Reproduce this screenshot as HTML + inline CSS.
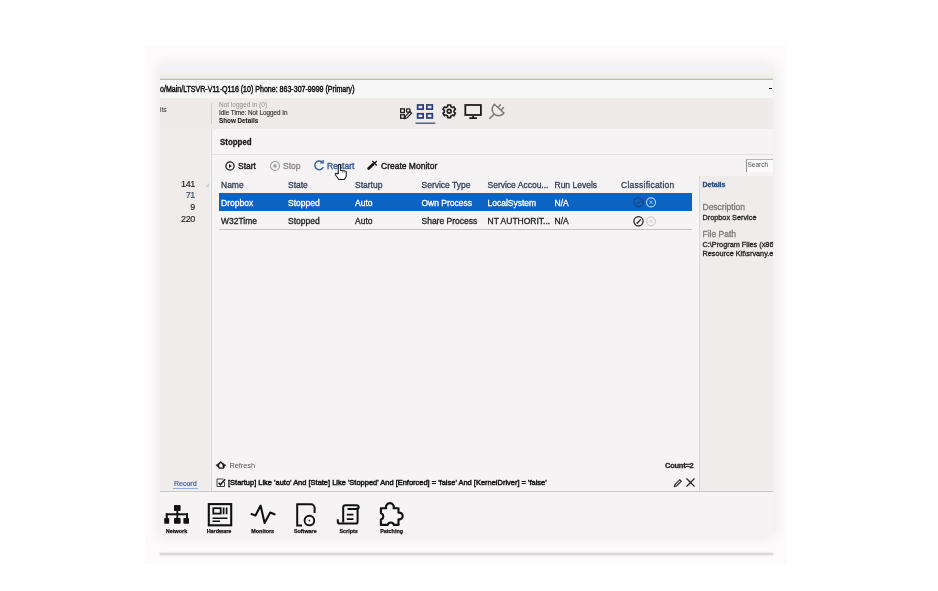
<!DOCTYPE html>
<html><head><meta charset="utf-8">
<style>
html,body{margin:0;padding:0;}
body{width:938px;height:591px;background:#fff;position:relative;overflow:hidden;font-family:"Liberation Sans",sans-serif;color:#222;}
.a{position:absolute;}
.t{position:absolute;white-space:nowrap;line-height:1;-webkit-text-stroke:0.3px currentColor;}
#frame{left:145px;top:45px;width:641px;height:519px;background:#fcfafa;box-shadow:0 0 2px #fdfcfc;}
#win{left:160px;top:65px;width:613px;height:471px;background:#f5f3f3;box-shadow:0 0 14px rgba(0,0,0,0.09);overflow:hidden;}
#bline{left:160px;top:553px;width:613px;height:2px;background:#d9d9d9;box-shadow:0 0 1.5px 0.5px #e2e2e2;}
</style></head><body>
<div id="all" style="position:absolute;left:0;top:0;width:938px;height:591px;will-change:transform">
<div class="a" id="frame"></div>
<div class="a" id="bline"></div>
<div class="a" id="win">
  <!-- header stripes -->
  <div class="a" style="left:0;top:0;width:613px;height:2px;background:#f3f3f3"></div>
  <div class="a" style="left:0;top:2px;width:613px;height:4px;background:#f2f2f7"></div>
  <div class="a" style="left:0;top:6px;width:613px;height:3px;background:#f5f2ee"></div>
  <div class="a" style="left:0;top:9px;width:613px;height:5px;background:#efeeee"></div>
  <div class="a" style="left:0;top:13px;width:613px;height:1px;background:#dde1d3"></div>
  <div class="a" style="left:0;top:14px;width:613px;height:1px;background:#b7c2a0"></div>
  <div class="a" style="left:0;top:15px;width:613px;height:18px;background:#f8f7f7"></div>
  <div class="t" style="left:0;top:19.6px;font-size:8.5px;color:#111;transform:scaleX(0.83);transform-origin:0 0;-webkit-text-stroke:0.45px #111">o/Main/LTSVR-V11-Q116 (10) Phone: 863-307-9999 (Primary)</div>
  <div class="a" style="left:609px;top:23px;width:3px;height:1px;background:#000"></div>
  <!-- gray band -->
  <div class="a" style="left:0;top:33px;width:613px;height:31px;background:#efebea"></div>
  <div class="t" style="left:0px;top:41.6px;font-size:6.5px;color:#444;-webkit-text-stroke:0.1px #444">its</div>
  <div class="a" style="left:51px;top:38px;width:1px;height:21px;background:#cfcfcf"></div>
  <div class="t" style="left:59px;top:36.5px;font-size:6.5px;color:#8a8a8a;-webkit-text-stroke:0">Not logged in (0)</div>
  <div class="t" style="left:59px;top:44.8px;font-size:6.3px;color:#333;-webkit-text-stroke:0.15px #333">Idle Time: Not Logged In</div>
  <div class="t" style="left:59px;top:53px;font-size:6.3px;color:#222;font-weight:bold;-webkit-text-stroke:0.1px #222">Show Details</div>
  <!-- sidebar -->
  <div class="a" style="left:0;top:64px;width:51px;height:362px;background:#f0ecec"></div>
  <div class="a" style="left:50px;top:64px;width:1px;height:362px;background:#f7f5f5"></div>
  <div class="a" style="left:51px;top:64px;width:1px;height:362px;background:#d4d1d1"></div>
  <div class="a" style="left:52px;top:64px;width:1px;height:362px;background:#f9f8f8"></div>
  <div class="t" style="left:5px;top:114.6px;width:30px;text-align:right;font-size:9px;letter-spacing:-0.35px;color:#222;-webkit-text-stroke:0.15px #222">141</div>
  <div class="t" style="left:5px;top:126.4px;width:30px;text-align:right;font-size:9px;letter-spacing:-0.35px;color:#3c4a64;-webkit-text-stroke:0.15px #3c4a64">71</div>
  <div class="t" style="left:5px;top:138.4px;width:30px;text-align:right;font-size:9px;letter-spacing:-0.35px;color:#222;-webkit-text-stroke:0.15px #222">9</div>
  <div class="t" style="left:5px;top:150.4px;width:30px;text-align:right;font-size:9px;letter-spacing:-0.35px;color:#222;-webkit-text-stroke:0.15px #222">220</div>
  <svg class="a" style="left:45px;top:118px" width="4" height="4" viewBox="0 0 4 4"><path d="M0 4 L4 0 V4 Z" fill="#cfcfcf"/></svg>
  <!-- content -->
  <div class="a" style="left:52px;top:89px;width:561px;height:1px;background:#e2e1e1"></div>
  <div class="t" style="left:59.5px;top:73px;font-size:9px;font-weight:bold;color:#1a1a1a;transform:scaleX(0.88);transform-origin:0 0">Stopped</div>
  <!-- details panel -->
  <div class="a" style="left:538px;top:111px;width:1px;height:315px;background:#faf9f7"></div><div class="a" style="left:539px;top:111px;width:74px;height:315px;background:#efeceb"></div>
  <div class="a" style="left:539px;top:111px;width:1px;height:315px;background:#d6d6d6"></div>

  <!-- top icons -->
  <!-- toolbar -->
  <svg class="a" style="left:64px;top:94.5px" width="12" height="12" viewBox="0 0 12 12"><circle cx="6" cy="6" r="4.1" fill="none" stroke="#222" stroke-width="1.3"/><path d="M5 4.1 L7.8 6 L5 7.9 Z" fill="#222"/></svg>
  <div class="t" style="left:78px;top:96.5px;font-size:8.5px;color:#1a1a1a;-webkit-text-stroke:0.4px #1a1a1a">Start</div>
  <svg class="a" style="left:108.5px;top:94.5px" width="12" height="12" viewBox="0 0 12 12"><circle cx="6" cy="6" r="4.5" fill="none" stroke="#9c9c9c" stroke-width="1.1"/><rect x="4.5" y="4.5" width="3" height="3" fill="#9c9c9c"/></svg>
  <div class="t" style="left:123px;top:96.5px;font-size:8.5px;color:#8a8a8a">Stop</div>
  <svg class="a" style="left:153px;top:94px" width="12" height="12" viewBox="0 0 12 12" fill="none" stroke="#3a5f9a" stroke-width="1.4"><path d="M9.3 3.2 A4.4 4.4 0 1 0 10.3 8"/><path d="M10.2 0.9 V3.9 H7.2"/></svg>
  <div class="t" style="left:167px;top:96.5px;font-size:8.5px;color:#2a5596;-webkit-text-stroke:0.35px #2a5596">Restart</div>
  <svg class="a" style="left:206px;top:94px" width="12" height="12" viewBox="0 0 12 12" fill="none" stroke="#1a1a1a"><path d="M2.6 9.6 L6.8 5.4" stroke-width="2.8" stroke-linecap="round"/><path d="M6.3 2 L10.8 6.5 M10.8 2 L6.3 6.5" stroke-width="1.3"/></svg>
  <div class="t" style="left:221px;top:96.5px;font-size:8.5px;color:#1a1a1a;-webkit-text-stroke:0.4px #1a1a1a">Create Monitor</div>
  <!-- cursor -->
  <!-- search -->
  <div class="a" style="left:586px;top:94px;width:27px;height:11.5px;background:#fbfafa;border-left:1px solid #8f8f8f;border-top:1px solid #b5b5b5"></div>
  <div class="t" style="left:587.5px;top:97.3px;font-size:6.5px;color:#6a6a6a;-webkit-text-stroke:0.1px #6a6a6a">Search</div>
  <!-- table -->
  <div class="a" style="left:59px;top:128px;width:473px;height:18px;background:#0d63c2"></div>
  <div class="a" style="left:59px;top:164px;width:473px;height:1px;background:#c4c4c4"></div>
  <div class="t" style="left:61px;top:116px;font-size:8.5px;color:#35415c">Name</div>
  <div class="t" style="left:128px;top:116px;font-size:8.5px;color:#35415c">State</div>
  <div class="t" style="left:195px;top:116px;font-size:8.5px;color:#35415c">Startup</div>
  <div class="t" style="left:261.5px;top:116px;font-size:8.5px;color:#35415c">Service Type</div>
  <div class="t" style="left:327.5px;top:116px;font-size:8.5px;color:#35415c">Service Accou...</div>
  <div class="t" style="left:394.5px;top:116px;font-size:8.5px;color:#35415c">Run Levels</div>
  <div class="t" style="left:461px;top:116px;font-size:8.5px;color:#35415c;letter-spacing:0.25px">Classification</div>

  <div class="t" style="left:61px;top:134.3px;font-size:8.5px;color:#fff">Dropbox</div>
  <div class="t" style="left:128px;top:134.3px;font-size:8.5px;color:#fff">Stopped</div>
  <div class="t" style="left:195px;top:134.3px;font-size:8.5px;color:#fff">Auto</div>
  <div class="t" style="left:261.5px;top:134.3px;font-size:8.5px;color:#fff">Own Process</div>
  <div class="t" style="left:327.5px;top:134.3px;font-size:8.5px;color:#fff">LocalSystem</div>
  <div class="t" style="left:394.5px;top:134.3px;font-size:8.5px;color:#fff">N/A</div>
  <svg class="a" style="left:472px;top:131px" width="24" height="12" viewBox="0 0 24 12" fill="none">
    <circle cx="6.5" cy="6.3" r="4.5" stroke="#1a4680" stroke-width="1.4"/><path d="M4.6 6.8 L5.9 8 L8.8 4.6" stroke="#1a4680" stroke-width="1.2"/>
    <circle cx="19" cy="6.3" r="4.5" stroke="#a9d0f7" stroke-width="1.2"/><path d="M17.5 4.8 L20.5 7.8 M20.5 4.8 L17.5 7.8" stroke="#a9d0f7" stroke-width="1"/>
  </svg>

  <div class="t" style="left:61px;top:152.3px;font-size:8.5px;color:#222">W32Time</div>
  <div class="t" style="left:128px;top:152.3px;font-size:8.5px;color:#222">Stopped</div>
  <div class="t" style="left:195px;top:152.3px;font-size:8.5px;color:#222">Auto</div>
  <div class="t" style="left:261.5px;top:152.3px;font-size:8.5px;color:#222">Share Process</div>
  <div class="t" style="left:327.5px;top:152.3px;font-size:8.5px;color:#222">NT AUTHORIT...</div>
  <div class="t" style="left:394.5px;top:152.3px;font-size:8.5px;color:#222">N/A</div>
  <svg class="a" style="left:472px;top:149.5px" width="24" height="12" viewBox="0 0 24 12" fill="none">
    <circle cx="6.5" cy="6.3" r="4.6" stroke="#1e1e1e" stroke-width="1.2"/><path d="M4.5 7.4 L5.4 8.2 L8.8 4.4" stroke="#1e1e1e" stroke-width="1.3"/>
    <circle cx="19" cy="6.3" r="4.5" stroke="#c4c4c4" stroke-width="1"/><path d="M17.6 4.9 L20.4 7.7 M20.4 4.9 L17.6 7.7" stroke="#c4c4c4" stroke-width="0.9"/>
  </svg>
  <!-- details -->
  <div class="t" style="left:542.5px;top:116px;font-size:7px;font-weight:bold;color:#1f4f8f">Details</div>
  <div class="t" style="left:542.5px;top:138px;font-size:8.5px;color:#7a7a7a">Description</div>
  <div class="t" style="left:542.5px;top:148.5px;font-size:7.3px;color:#222">Dropbox Service</div>
  <div class="t" style="left:542.5px;top:165px;font-size:8.5px;color:#7a7a7a">File Path</div>
  <div class="t" style="left:542.5px;top:175.5px;font-size:7.3px;color:#222">C:\Program Files (x86)\Windows</div>
  <div class="t" style="left:542.5px;top:185px;font-size:7.3px;color:#222">Resource Kit\srvany.exe</div>
  <!-- refresh / count -->
  
  <div class="t" style="left:69.5px;top:396.5px;font-size:7.3px;color:#555;-webkit-text-stroke:0">Refresh</div>
  <div class="t" style="left:505px;top:396.5px;font-size:7.5px;font-weight:bold;color:#222;letter-spacing:-0.25px">Count=2</div>
  <!-- filter -->
  <svg class="a" style="left:56px;top:413px" width="10" height="10" viewBox="0 0 10 10" fill="none" stroke="#444" stroke-width="1"><path d="M7.5 1 H1 V8.5 H8.5 V4"/><path d="M2.6 4.6 L4.3 6.8 L9.2 1.2" stroke="#1a1a1a" stroke-width="1.5"/></svg>
  <div class="t" style="left:68px;top:414.4px;font-size:7.47px;color:#111;-webkit-text-stroke:0.45px #111">[Startup] Like 'auto' And [State] Like 'Stopped' And [Enforced] = 'false' And [KernelDriver] = 'false'</div>
  <svg class="a" style="left:513px;top:413px" width="10" height="10" viewBox="0 0 10 10" fill="none" stroke="#222" stroke-width="1.1"><path d="M1.5 8.5 L2 6.5 L6.8 1.7 L8.3 3.2 L3.5 8 Z"/></svg>
  <svg class="a" style="left:525px;top:412px" width="11" height="11" viewBox="0 0 11 11" fill="none" stroke="#222" stroke-width="1.2"><path d="M1.5 1.5 L9.5 9.5 M9.5 1.5 L1.5 9.5"/></svg>
  <div class="t" style="left:14px;top:414.5px;font-size:7px;color:#3a5d9c;-webkit-text-stroke:0.2px #3a5d9c">Record</div>
  <div class="a" style="left:13px;top:422.5px;width:25px;height:1.6px;background:#8fb0dc"></div>
  <!-- bottom -->
  <div class="a" style="left:0;top:426px;width:613px;height:1px;background:#c9c9c9"></div>
</div>

<svg class="a" style="left:0;top:0" width="938" height="591" viewBox="0 0 938 591">
  <g fill="none" stroke="#1e1e1e" stroke-width="1.3">
    <rect x="400.65" y="108.85" width="3.7" height="3.7"/><rect x="400.65" y="114.75" width="3.7" height="3.5"/><rect x="406.5" y="108.85" width="3.4" height="3.2" rx="0.6"/>
    <path d="M404.9 118.5 L405.4 116.2 L410 111.6 L411.6 113.2 L407 117.8 Z" stroke-width="1.2"/>
  </g>
  <g fill="#e2e7f3" stroke="#273e7a" stroke-width="1.7">
    <rect x="417.65" y="104.95" width="5.5" height="4.2"/><rect x="426.85" y="104.95" width="5.5" height="4.2"/>
    <rect x="417.65" y="113.75" width="5.5" height="4.2"/><rect x="426.85" y="113.75" width="5.5" height="4.2"/>
  </g>
  <rect x="415.5" y="122.5" width="19.7" height="1.4" fill="#4a5a7a"/>
  <g fill="#1a1a1a" stroke="#1a1a1a" stroke-width="1.4" stroke-linejoin="round">
    <path d="M218.3 464.4 L220.7 462 L223.4 464.4 M218.1 466.3 L219.5 468.1 H223.2 L224.3 466.5" fill="none"/>
    <path d="M215.9 465.3 L218.9 463.4 L218.9 467.2 Z M225.9 465.3 L222.9 463.4 L222.9 467.2 Z" stroke-width="0.6"/>
  </g>
  <g fill="none" stroke="#1e1e1e" stroke-width="1.6" stroke-linejoin="round">
    <path d="M447.52 106.70 L447.74 104.97 L450.66 104.97 L450.88 106.70 A4.9 4.9 0 0 1 452.35 107.55 L453.95 106.87 L455.42 109.40 L454.03 110.45 A4.9 4.9 0 0 1 454.03 112.15 L455.42 113.20 L453.95 115.73 L452.35 115.05 A4.9 4.9 0 0 1 450.88 115.90 L450.66 117.63 L447.74 117.63 L447.52 115.90 A4.9 4.9 0 0 1 446.05 115.05 L444.45 115.73 L442.98 113.20 L444.37 112.15 A4.9 4.9 0 0 1 444.37 110.45 L442.98 109.40 L444.45 106.87 L446.05 107.55 A4.9 4.9 0 0 1 447.52 106.70 Z"/>
    <circle cx="449.2" cy="111.3" r="1.9" stroke-width="1.7"/>
  </g>
  <g fill="none" stroke="#1e1e1e" stroke-width="1.8">
    <rect x="465.3" y="105" width="15.6" height="10"/>
    <path d="M473.1 116 V117.6 M469.3 118.1 H476.9" />
  </g>
  <g fill="none" stroke="#7a7a7a" stroke-width="1.5" stroke-linecap="round">
    <path d="M494.4 104.3 L503.9 113 L503.1 113.9 A6.45 6.45 0 0 1 493.6 105.2 Z"/>
    <path d="M494 114.3 L489.8 118.4 M498.2 107.2 L500.4 104.8 M501.3 110 L503.5 107.6"/>
  </g>
  <g fill="#111" stroke="none">
    <rect x="174" y="505" width="6.6" height="6" rx="0.8"/>
    <rect x="176.4" y="510" width="1.9" height="4.5"/>
    <rect x="165.8" y="513.3" width="22.2" height="2"/>
    <rect x="165.8" y="513.3" width="2" height="5.5"/><rect x="176.4" y="513.3" width="1.9" height="5.5"/><rect x="186" y="513.3" width="2" height="5.5"/>
    <rect x="164.2" y="518" width="5" height="5.8" rx="0.8"/><rect x="174" y="518" width="6.6" height="5.8" rx="0.8"/><rect x="183.4" y="518" width="5.6" height="5.8" rx="0.8"/>
  </g>
  <g fill="none" stroke="#111">
    <rect x="208.8" y="504.1" width="22.4" height="21.2" stroke-width="2.1"/>
    <rect x="213.3" y="508.2" width="7.4" height="5.4" stroke-width="1.8"/>
    <path d="M223.6 507.4v6.8M226.6 507.4v6.8" stroke-width="1.7"/>
    <path d="M212.5 518.3h15M212.5 521.3h7.5" stroke-width="1.4"/>
    <path d="M251.5 514 L255.5 515.5 L260.6 505.6 L264.6 523 L270.2 512.6 L274.5 514.3" stroke-width="2.1" stroke-linejoin="round" stroke-linecap="round"/>
    <path d="M302 525.6 H297.2 V504.3 H311 a3.6 3.6 0 0 1 3.6 3.6 V513" stroke-width="2"/>
    <circle cx="309.4" cy="520.6" r="4.8" stroke-width="1.9"/>
    <circle cx="309.4" cy="520.6" r="0.8" fill="#111" stroke="none"/>
    <path d="M337.8 519.2 v2.6 a1.8 1.8 0 0 0 1.8 1.8 h15.8 a2.2 2.2 0 0 0 2.2 -2.2 V507.5" stroke-width="2"/>
    <path d="M343.2 522.5 V507.5 a2.3 2.3 0 0 1 2.3 -2.3 h11.3 a1.9 1.9 0 0 1 0 3.8 h-9.3" stroke-width="2"/>
    <path d="M346.8 514.6h6.6M346.8 519.2h6.6" stroke-width="1.8"/>
    <path d="M380.9 508.3 h5.3 a3.9 3.9 0 1 1 7.4 0 h4.9 v4.4 a3.4 3.4 0 1 1 0 6.6 v5.6 h-4.6 a3.2 3.2 0 0 0 -6.2 0 h-6.8 v-5.4 a3.2 3.2 0 0 0 0 -6.2 z" stroke-width="2.1" stroke-linejoin="round"/>
  </g>
  <g font-family="Liberation Sans" font-size="5.4" font-weight="bold" fill="#111" stroke="#111" stroke-width="0.25" text-anchor="middle">
    <text x="176.5" y="533.2">Network</text>
    <text x="219" y="533.2">Hardware</text>
    <text x="262.7" y="533.2">Monitors</text>
    <text x="305.3" y="533.2">Software</text>
    <text x="348.6" y="533.2">Scripts</text>
    <text x="391.6" y="533.2">Patching</text>
  </g>
  <path d="M338.3 173.5 V165.4 a1.1 1.1 0 0 1 2.2 0 V170.3 L345.3 171 a1 1 0 0 1 1 1 V176.2 L344.2 179.5 H338.8 L335.4 174.7 a0.9 0.9 0 0 1 1.4 -1.1 Z" fill="#fff" stroke="#1e1e1e" stroke-width="1.1" stroke-linejoin="round"/>
  <path d="M342.3 170.6 V173 M344.2 170.9 V173" stroke="#555" stroke-width="0.6"/>
</svg>
</div>
</body></html>
